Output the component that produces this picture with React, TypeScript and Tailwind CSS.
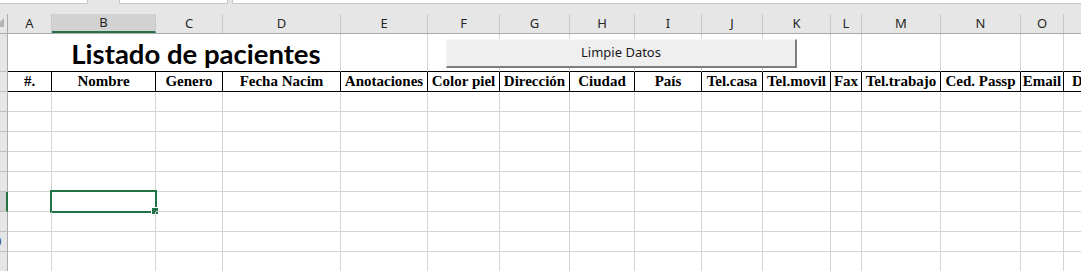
const cols = [
  { id: 'A', w: 'w-[44px]', head: '#.' },
  { id: 'B', w: 'w-[104px]', head: 'Nombre' },
  { id: 'C', w: 'w-[67px]', head: 'Genero' },
  { id: 'D', w: 'w-[118px]', head: 'Fecha Nacim' },
  { id: 'E', w: 'w-[87px]', head: 'Anotaciones' },
  { id: 'F', w: 'w-[72px]', head: 'Color piel' },
  { id: 'G', w: 'w-[70px]', head: 'Dirección' },
  { id: 'H', w: 'w-[65px]', head: 'Ciudad' },
  { id: 'I', w: 'w-[67px]', head: 'País' },
  { id: 'J', w: 'w-[61px]', head: 'Tel.casa' },
  { id: 'K', w: 'w-[68px]', head: 'Tel.movil' },
  { id: 'L', w: 'w-[31px]', head: 'Fax' },
  { id: 'M', w: 'w-[79px]', head: 'Tel.trabajo' },
  { id: 'N', w: 'w-[80px]', head: 'Ced. Passp' },
  { id: 'O', w: 'w-[43px]', head: 'Email' },
  { id: 'P', w: 'w-[120px]', head: 'Diagnóstico' },
];

const SELECTED_ROW = 8;
const SELECTED_COL = 'B';

function RowHead({ n, h }: { n: number; h: string }) {
  const active = n === SELECTED_ROW;
  return (
    <div
      className={`${h} w-[8px] shrink-0 overflow-hidden border-b border-[#bdbdbd] ${
        active ? 'bg-[#d2d2d2] border-r-2 border-r-[#217346]' : 'bg-[#e6e6e6] border-r border-r-[#ababab]'
      }`}
    >
      <div className="w-[25px] h-full -ml-[18px] flex items-center justify-center text-[12px] text-[#333] font-['Noto_Sans',sans-serif]">
        {n}
      </div>
    </div>
  );
}

export default function App() {
  const bodyRows = [3, 4, 5, 6, 7, 8, 9, 10, 11];

  return (
    <div className="w-[1081px] h-[271px] overflow-hidden bg-white relative">
      {/* formula bar remains */}
      <div className="h-[14px] flex bg-[#e6e6e6]">
        <div className="w-[88px] h-[4px] bg-white border-b border-r border-[#c6c6c6]" />
        <div className="w-[31px]" />
        <div className="w-[109px] h-[4px] bg-white border-b border-x border-[#c6c6c6]" />
        <div className="w-[4px]" />
        <div className="flex-1 h-[4px] bg-white border-b border-l border-[#c6c6c6]" />
      </div>

      {/* column letters */}
      <div className="flex h-[20px] bg-[#e6e6e6] border-b border-[#ababab]">
        <div className="w-[8px] shrink-0 border-r border-[#ababab] relative overflow-hidden">
          <svg className="absolute left-0 top-[4px]" width="5" height="10" viewBox="0 0 5 10">
            <polygon points="4,0 4,9 -5,9" fill="#b4b4b4" />
          </svg>
        </div>
        {cols.map((c) => {
          const active = c.id === SELECTED_COL;
          return (
            <div
              key={c.id}
              className={`${c.w} shrink-0 flex items-center justify-center border-r border-[#c8c8c8] text-[13px] text-[#262626] font-['Noto_Sans',sans-serif] ${
                active ? 'bg-[#d2d2d2] border-b-2 border-b-[#217346] text-[#217346]' : ''
              }`}
            >
              {c.id}
            </div>
          );
        })}
      </div>

      {/* row 1: title */}
      <div className="flex h-[38px]">
        <RowHead n={1} h="h-[38px]" />
        <div className="w-[44px] shrink-0 border-b border-black" />
        <div className="w-[289px] shrink-0 flex items-center justify-center border-r border-r-[#d4d4d4] border-b border-black">
          <span className="font-['Lato',sans-serif] font-bold text-[27.5px] text-black leading-none pt-[2px]">
            Listado de pacientes
          </span>
        </div>
        {cols.slice(4).map((c) => (
          <div key={c.id} className={`${c.w} shrink-0 border-r border-r-[#d4d4d4] border-b border-black`} />
        ))}
      </div>

      {/* row 2: field headers */}
      <div className="flex h-[20px]">
        <RowHead n={2} h="h-[20px]" />
        {cols.map((c) => (
          <div
            key={c.id}
            className={`${c.w} shrink-0 flex items-center ${
              c.id === 'P' ? 'justify-start pl-[8px]' : 'justify-center'
            } border-r border-b border-black font-['Liberation_Serif',serif] font-bold text-[15px] text-black whitespace-nowrap overflow-hidden`}
          >
            {c.head}
          </div>
        ))}
      </div>

      {/* empty rows */}
      {bodyRows.map((r) => (
        <div key={r} className="flex h-[20px]">
          <RowHead n={r} h="h-[20px]" />
          {cols.map((c) => (
            <div key={c.id} className={`${c.w} shrink-0 border-r border-b border-[#d4d4d4] relative`}>
              {r === SELECTED_ROW && c.id === SELECTED_COL && (
                <>
                  <div className="absolute -left-[2px] -top-[2px] w-[107px] h-[23px] border-2 border-[#217346]" />
                  <div className="absolute left-[99px] top-[15px] w-[8px] h-[8px] bg-[#217346] border border-white" />
                </>
              )}
            </div>
          ))}
        </div>
      ))}

      {/* floating form button */}
      <button className="absolute left-[446px] top-[39px] w-[351px] h-[29px] bg-[#efefef] border-t border-l border-[#f7f7f7] border-r-2 border-b-2 border-r-[#7d7d7d] border-b-[#7d7d7d] text-[13px] text-[#1a1a1a] font-['Noto_Sans',sans-serif] flex items-center justify-center">
        Limpie Datos
      </button>
    </div>
  );
}
